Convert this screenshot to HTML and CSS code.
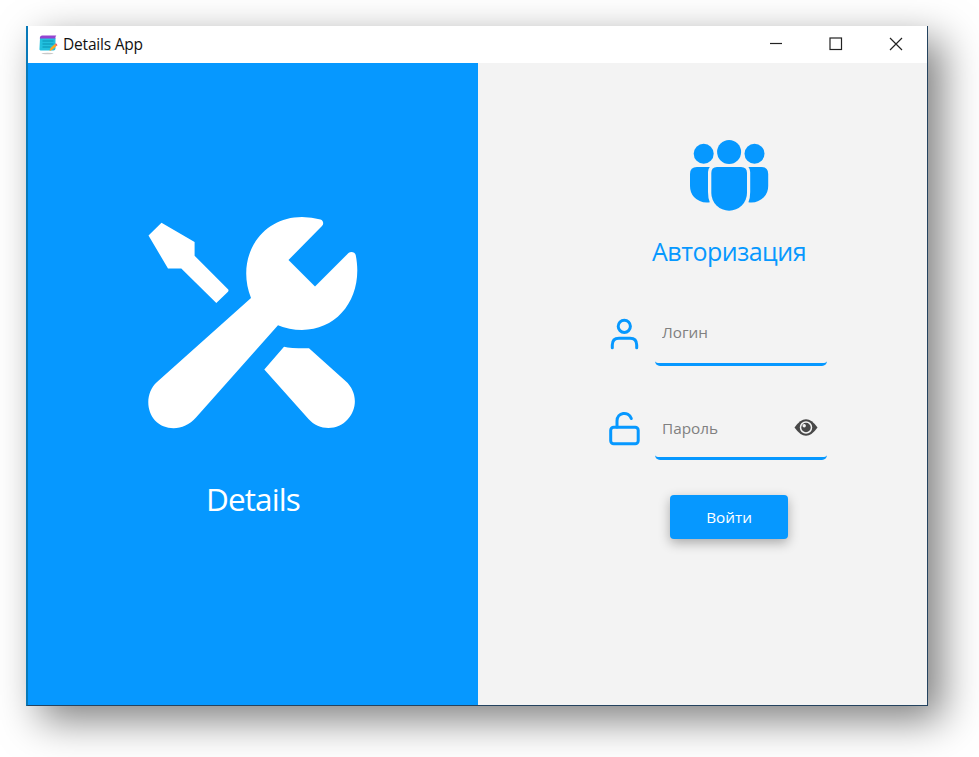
FILE: index.html
```html
<!DOCTYPE html>
<html lang="ru">
<head>
<meta charset="utf-8">
<title>Details App</title>
<link rel="stylesheet" href="styles.css">
</head>
<body>
<div class="window">
  <header class="titlebar">
    <svg class="app-icon" viewBox="0 0 19 20">
      <ellipse cx="8.500" cy="18.500" rx="6" ry=".8" fill="#c9c9c9"/>
      <path d="M1 3h15.500v10.500q0 2-2 2H2.500q-2.500 0-2-2z" fill="#22c0de"/>
      <path d="M.8 3.500q0-3 2.500-3h14q-1 1-1 3z" fill="#9544d0"/>
      <path d="M3.500 6h11M3.500 9h11M3.500 12h8" stroke="#0993b4" stroke-width="1"/>
      <path d="M10.500 16l1-3 4.500-4 1.500 2-4.500 4z" fill="#ffa51f"/>
      <path d="M16 9l1-.8 1.500 2-1 .8z" fill="#f0475a"/>
    </svg>
    <span class="title">Details App</span>
    <div class="controls">
      <svg viewBox="0 0 14 14"><path d="M1 6.500h12"/></svg>
      <svg viewBox="0 0 14 14"><rect x="1" y="1" width="11.500" height="11.500"/></svg>
      <svg viewBox="0 0 14 14"><path d="M1 1l12 12M13 1L1 13"/></svg>
    </div>
  </header>
  <main class="content">
    <section class="brand">
      <svg class="tools" viewBox="148 216 211 213" fill="#fff">
        <path d="M148.500 235.500L161.500 222.700L194.600 242V255.700L228 289.300Q229 290.500 228 291.700L216.300 303L181.300 268.500H168Z"/>
        <path d="M251 298C235 257 261 217 302 217Q312 217 320.500 219.500C323.500 220.500 324 224 322 226L288.500 260L315 286.500L348.500 253C351 251 355 252 355.700 255C364 296 339 330 302 330Q289 330 278 325.200L196 417.500C184 431.500 165 431 155 420.500C145.500 410 146 392 157 382Z"/>
        <path d="M284 346.800Q291 348.500 309 348.300L345.500 381C357 391 358 408 348 419C338 431 319 431 308.500 419L264.300 369.500Z"/>
      </svg>
      <h1 class="brand-name">Details</h1>
    </section>
    <section class="login">
      <svg class="users" viewBox="689 139 80 72">
        <circle cx="703.700" cy="153.700" r="10"/>
        <circle cx="754.500" cy="153.700" r="10"/>
        <circle cx="729.100" cy="152" r="12"/>
        <path d="M697 167H709.800Q708 169 708 172V192Q708 198 709.800 202.300Q700 203.500 694 197Q690 192.500 690 186V174Q690 167 697 167Z"/>
        <path d="M761.200 167H748.400Q750.200 169 750.200 172V192Q750.200 198 748.400 202.300Q758 203.500 764 197Q768.200 192.500 768.200 186V174Q768.200 167 761.200 167Z"/>
        <path d="M717 167H741Q747 167 747 173V193A17.850 17.700 0 0 1 711.300 193V173Q711.300 167 717 167Z"/>
      </svg>
      <h2 class="heading">Авторизация</h2>
      <form class="form">
        <label class="row">
          <svg class="icon" viewBox="609 320 32 32"><circle cx="624.300" cy="326.300" r="6.100"/><path d="M612.300 347.700V345Q612.300 338.200 619 338.200H630Q636.700 338.200 636.700 345V347.700"/></svg>
          <span class="field"><input class="input" type="text" placeholder="Логин"></span>
        </label>
        <label class="row">
          <svg class="icon" viewBox="609 414 32 32"><rect x="610.700" y="427.200" width="27.500" height="16.500" rx="3"/><path d="M617 427V421C617 412 628.500 410.800 631.300 418.500"/></svg>
          <span class="field field-password"><input class="input" type="password" placeholder="Пароль">
            <svg class="eye" viewBox="0 0 24 17"><path d="M.500 8.500Q12-8 23.500 8.500Q12 25 .500 8.500Z" fill="#484848"/><circle cx="12" cy="8.500" r="5.500" fill="none" stroke="#f3f3f3" stroke-width="1.500"/><circle cx="10.200" cy="6.800" r="1.700" fill="#f3f3f3"/></svg>
          </span>
        </label>
        <button class="submit" type="button">Войти</button>
      </form>
    </section>
  </main>
</div>
</body>
</html>
```
FILE: styles.css
```css
* { box-sizing: border-box; }
body {
  margin: 0;
  padding: 26px;
  height: 757px;
  overflow: hidden;
  background: #fff;
  font-family: "Open Sans", "Noto Sans", sans-serif;
}
.window {
  width: 902px;
  height: 680px;
  display: flex;
  flex-direction: column;
  border: solid #24435f;
  border-width: 0 1px 1px 2px;
  border-left-color: #0879b8;
  background: #f3f3f3;
  box-shadow: 14px 14px 38px rgba(0, 0, 0, .5);
}
.titlebar {
  height: 37px;
  flex: none;
  display: flex;
  align-items: center;
  padding: 0 24px 0 11px;
  background: #fff;
}
.app-icon { width: 19px; height: 20px; flex: none; }
.title {
  margin: -1px 0 0 5px;
  font: 15.5px/20px "Open Sans", sans-serif;
  letter-spacing: -.2px;
  color: #111;
}
.controls { margin: -2px 0 0 auto; display: flex; gap: 46px; }
.controls svg { width: 14px; height: 14px; fill: none; stroke: #222; stroke-width: 1.2; overflow: visible; }
.content { flex: 1; display: flex; }
.brand {
  width: 450px;
  display: flex;
  flex-direction: column;
  align-items: center;
  padding-top: 153px;
  background: #0698ff;
}
.tools { width: 211px; height: 213px; }
.brand-name {
  margin: 48px 0 0;
  font: 400 31.5px/44px "Open Sans", sans-serif;
  letter-spacing: -.9px;
  color: #fff;
}
.login {
  flex: 1;
  display: flex;
  flex-direction: column;
  align-items: center;
  padding: 76px 0 0 53px;
}
.users { width: 80px; height: 72px; fill: #0698ff; }
.heading {
  margin: 22px 0 0;
  font: 25px/36px "Open Sans", sans-serif;
  letter-spacing: -.5px;
  color: #0698ff;
}
.form { display: flex; flex-direction: column; width: 240px; margin-top: 37px; }
.row { display: flex; align-items: center; height: 60px; margin-bottom: 34px; }
.icon { width: 32px; height: 32px; fill: none; stroke: #0698ff; stroke-width: 3; stroke-linecap: round; overflow: visible; }
.field {
  width: 172px;
  height: 60px;
  display: flex;
  margin-left: 14px;
  padding: 0 9px 5px 7px;
  align-items: center;
  border-bottom: 3px solid #0698ff;
  border-radius: 5px;
}
.field-password { padding-bottom: 2px; }
.input {
  flex: 1;
  min-width: 0;
  padding: 0;
  border: 0;
  outline: 0;
  background: none;
  font: 15.3px/22px "Open Sans", sans-serif;
}
.input::placeholder { color: #808080; opacity: 1; }
.eye { width: 24px; height: 17px; }
.submit {
  align-self: center;
  width: 118px;
  height: 44px;
  margin-top: 1px;
  border: 0;
  border-radius: 4px;
  background: #0698ff;
  color: #fff;
  font: 15.3px/22px "Open Sans", sans-serif;
  box-shadow: 0 4px 12px rgba(0, 0, 0, .3);
}
```
